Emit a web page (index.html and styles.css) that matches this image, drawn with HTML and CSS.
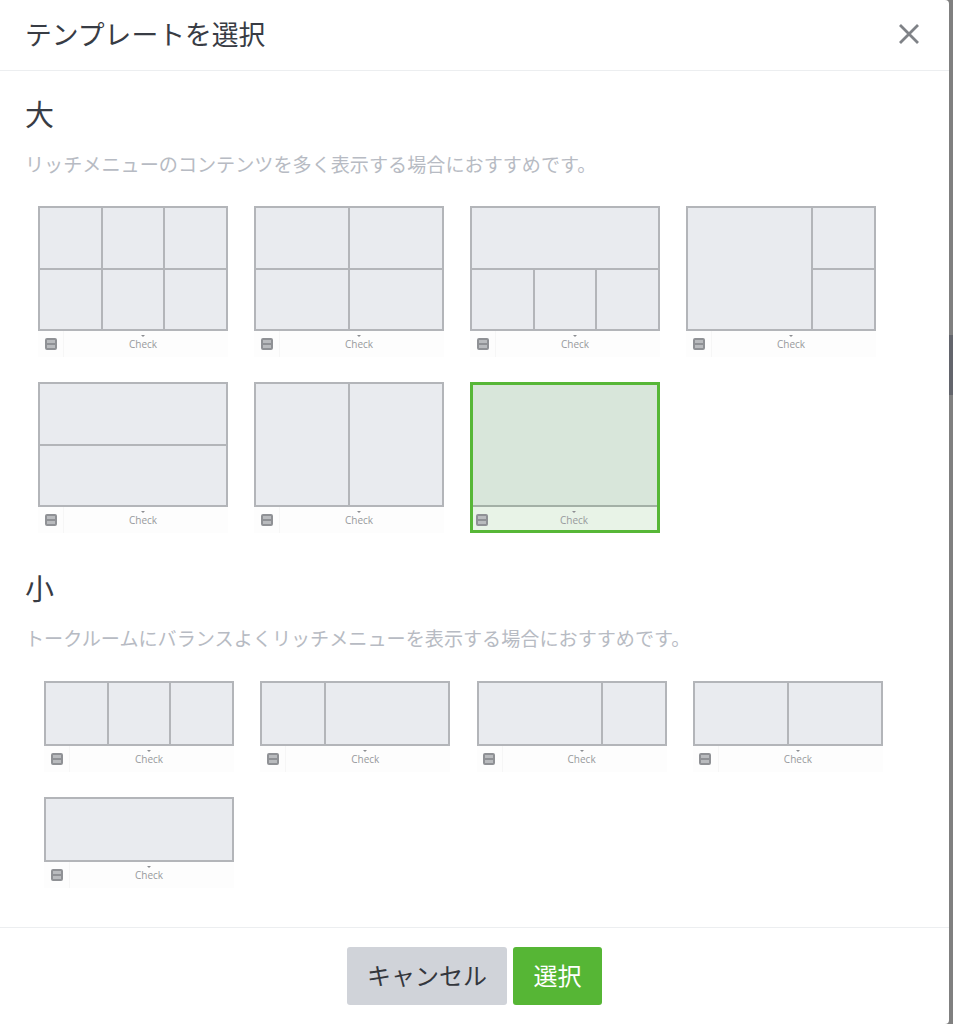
FILE: index.html
```html
<!DOCTYPE html>
<html lang="ja">
    <head>
        <meta charset="utf-8">
        <title>テンプレートを選択</title>
        <link rel="stylesheet" href="styles.css">
    </head>
    <body>
        <div class="modal">
            <div class="modal-head">
                <h1 class="modal-title">テンプレートを選択</h1>
                <svg class="close" width="22" height="22" viewBox="0 0 22 22"><path d="M2 2 L20 20 M20 2 L2 20" stroke="#7f8287" stroke-width="2.8" fill="none"/></svg>
            </div>
            <div class="modal-body">
                <h2 class="size-title">大</h2>
                <p class="size-note">リッチメニューのコンテンツを多く表示する場合におすすめです。</p>
                <div class="tpl-grid tpl-large">
                    <div class="tpl">
                        <div class="tpl-areas cols-3 rows-2">
                            <div class="area"></div><div class="area"></div><div class="area"></div>
                            <div class="area"></div><div class="area"></div><div class="area"></div>
                        </div>
                        <div class="tpl-bar"><span class="bar-icon"><i></i></span><span class="bar-label">Check</span></div>
                    </div>
                    <div class="tpl">
                        <div class="tpl-areas cols-2 rows-2">
                            <div class="area"></div><div class="area"></div>
                            <div class="area"></div><div class="area"></div>
                        </div>
                        <div class="tpl-bar"><span class="bar-icon"><i></i></span><span class="bar-label">Check</span></div>
                    </div>
                    <div class="tpl">
                        <div class="tpl-areas cols-3 rows-2">
                            <div class="area span-3"></div>
                            <div class="area"></div><div class="area"></div><div class="area"></div>
                        </div>
                        <div class="tpl-bar"><span class="bar-icon"><i></i></span><span class="bar-label">Check</span></div>
                    </div>
                    <div class="tpl">
                        <div class="tpl-areas cols-wide-left rows-2">
                            <div class="area span-rows"></div><div class="area"></div>
                            <div class="area"></div>
                        </div>
                        <div class="tpl-bar"><span class="bar-icon"><i></i></span><span class="bar-label">Check</span></div>
                    </div>
                    <div class="tpl">
                        <div class="tpl-areas rows-2">
                            <div class="area"></div>
                            <div class="area"></div>
                        </div>
                        <div class="tpl-bar"><span class="bar-icon"><i></i></span><span class="bar-label">Check</span></div>
                    </div>
                    <div class="tpl">
                        <div class="tpl-areas cols-2">
                            <div class="area"></div><div class="area"></div>
                        </div>
                        <div class="tpl-bar"><span class="bar-icon"><i></i></span><span class="bar-label">Check</span></div>
                    </div>
                    <div class="tpl selected">
                        <div class="tpl-areas">
                            <div class="area"></div>
                        </div>
                        <div class="tpl-bar"><span class="bar-icon"><i></i></span><span class="bar-label">Check</span></div>
                    </div>
                </div>

                <h2 class="size-title second">小</h2>
                <p class="size-note">トークルームにバランスよくリッチメニューを表示する場合におすすめです。</p>
                <div class="tpl-grid tpl-small">
                    <div class="tpl">
                        <div class="tpl-areas cols-3">
                            <div class="area"></div><div class="area"></div><div class="area"></div>
                        </div>
                        <div class="tpl-bar"><span class="bar-icon"><i></i></span><span class="bar-label">Check</span></div>
                    </div>
                    <div class="tpl">
                        <div class="tpl-areas cols-wide-right">
                            <div class="area"></div><div class="area"></div>
                        </div>
                        <div class="tpl-bar"><span class="bar-icon"><i></i></span><span class="bar-label">Check</span></div>
                    </div>
                    <div class="tpl">
                        <div class="tpl-areas cols-wide-left">
                            <div class="area"></div><div class="area"></div>
                        </div>
                        <div class="tpl-bar"><span class="bar-icon"><i></i></span><span class="bar-label">Check</span></div>
                    </div>
                    <div class="tpl">
                        <div class="tpl-areas cols-2">
                            <div class="area"></div><div class="area"></div>
                        </div>
                        <div class="tpl-bar"><span class="bar-icon"><i></i></span><span class="bar-label">Check</span></div>
                    </div>
                    <div class="tpl">
                        <div class="tpl-areas">
                            <div class="area"></div>
                        </div>
                        <div class="tpl-bar"><span class="bar-icon"><i></i></span><span class="bar-label">Check</span></div>
                    </div>
                </div>
            </div>
            <div class="modal-foot">
                <button type="button" class="btn btn-cancel">キャンセル</button>
                <button type="button" class="btn btn-select">選択</button>
            </div>
        </div>
    </body>
</html>
```

FILE: styles.css
```css
html, body{
    margin: 0;
    height: 100%;
}
body{
    background: linear-gradient(#808080 335px, #63656c 335px, #63656c 395px, #808080 395px);
    font-family: "Noto Sans CJK JP", "Liberation Sans", sans-serif;
    color: #383c44;
    overflow: hidden;
}
.modal{
    width: 949px;
    height: 1024px;
    border-radius: 0 4px 4px 0;
    background-color: #ffffff;
    display: flex;
    flex-direction: column;
}
.modal-head{
    height: 71px;
    box-sizing: border-box;
    border-bottom: 1px solid #eceef0;
    display: flex;
    align-items: center;
    justify-content: space-between;
    padding: 0 29px 2px 25px;
    flex: none;
}
.modal-title{
    margin: 0 0 2px;
    font-size: 26.8px;
    font-weight: 400;
}
.close{
    display: block;
}
.modal-body{
    flex: 1;
    padding: 0 25px;
}
.size-title{
    margin: 0;
    padding-top: 22px;
    font-size: 29px;
    line-height: 40px;
    font-weight: 400;
}
.size-title.second{
    padding-top: 34px;
}
.size-note{
    margin: 18px 0 0;
    font-size: 19.12px;
    line-height: 26px;
    color: #b7bbc3;
}
.tpl-grid{
    display: grid;
    grid-template-columns: repeat(4, 190px);
    row-gap: 25px;
}
.tpl-large{
    column-gap: 26px;
    margin: 29px 0 0 13px;
}
.tpl-small{
    column-gap: 26.3px;
    margin: 30px 0 0 19px;
}
.tpl{
    width: 190px;
}
.tpl-areas{
    display: grid;
    box-sizing: border-box;
    background-color: #b3b5b9;
    gap: 2px;
    padding: 2px;
    height: 125px;
}
.tpl-small .tpl-areas{
    height: 65px;
}
.area{
    background-color: #e9ebef;
}
.cols-2{
    grid-template-columns: 1fr 1fr;
}
.cols-3{
    grid-template-columns: 1fr 1fr 1fr;
}
.rows-2{
    grid-template-rows: 1fr 1fr;
}
.cols-wide-left{
    grid-template-columns: 2fr 1fr;
}
.cols-wide-right{
    grid-template-columns: 1fr 2fr;
}
.span-3{
    grid-column: span 3;
}
.span-rows{
    grid-row: span 2;
}
.tpl-bar{
    height: 26px;
    display: flex;
    align-items: center;
    background-color: #fdfdfd;
    font-family: "Open Sans", "Liberation Sans", sans-serif;
}
.bar-icon{
    width: 26px;
    height: 100%;
    flex: none;
    display: flex;
    justify-content: center;
    align-items: center;
    border-right: 1px solid #f6f6f6;
    box-sizing: border-box;
}
.bar-icon i{
    display: block;
    width: 12px;
    height: 12px;
    box-sizing: border-box;
    border-radius: 2px;
    border: 2px solid #8f9195;
    background: linear-gradient(#8f9195, #8f9195) center / 100% 2px no-repeat, #b9bbbe;
}
.bar-label{
    flex: 1;
    padding-right: 6px;
    text-align: center;
    font-size: 10px;
    color: #97999c;
    position: relative;
}
.bar-label::before{
    content: "";
    position: absolute;
    left: calc(50% - 5px);
    top: -2px;
    border: 2px solid transparent;
    border-top: 2px solid #8c8e92;
}
.selected .tpl-areas{
    background-color: #57b737;
    padding: 3px 3px 0;
}
.selected .area{
    background-color: #d8e6da;
    border-bottom: 2px solid #a3b0a6;
}
.selected .tpl-bar{
    background-color: #e8f3e7;
    border: 3px solid #57b737;
    border-top: 0;
    box-sizing: border-box;
    padding-top: 3px;
}
.selected .bar-icon{
    border-right: 0;
    width: 18px;
}
.selected .bar-label{
    padding-right: 0;
}
.selected .bar-label::before{
    left: calc(50% - 2px);
}
.modal-foot{
    height: 97px;
    flex: none;
    box-sizing: border-box;
    border-top: 1px solid #eceef0;
    display: flex;
    justify-content: center;
    gap: 6px;
    padding-top: 19px;
}
.btn{
    height: 58px;
    border: 0;
    border-radius: 3px;
    padding: 0 0 4px;
    font-family: "Noto Sans CJK JP", "Liberation Sans", sans-serif;
    font-size: 24px;
}
.btn-cancel{
    width: 160px;
    background-color: #d0d3d9;
    color: #34373d;
}
.btn-select{
    width: 89px;
    background-color: #56b635;
    color: #ffffff;
}
```
